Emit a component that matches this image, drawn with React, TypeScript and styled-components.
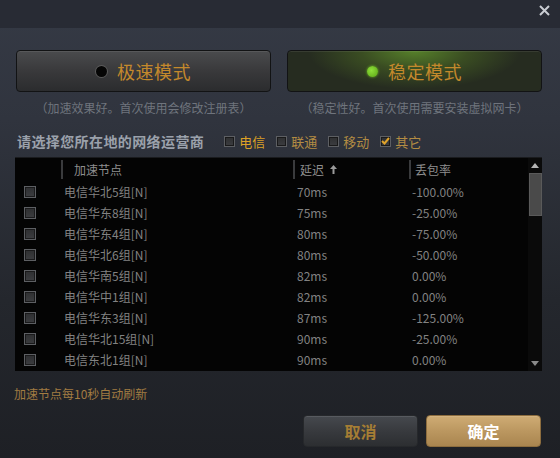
import React from "react";
import styled, { createGlobalStyle } from "styled-components";

const GlobalStyle = createGlobalStyle`
  html, body {
    margin: 0;
    padding: 0;
    background: #1e2025;
  }
  body {
    font-family: "Noto Sans CJK SC", "Noto Sans", "Liberation Sans", sans-serif;
  }
`;

const Dialog = styled.div`
  width: 560px;
  height: 458px;
  display: flex;
  flex-direction: column;
  background: linear-gradient(180deg, #353a45 0px, #30343e 120px, #24272d 300px, #1e2025 100%);
  overflow: hidden;
`;

const TitleBar = styled.div`
  height: 28px;
  flex-shrink: 0;
  display: flex;
  justify-content: flex-end;
  align-items: flex-start;
  background: #282b34;
`;

const CloseButton = styled.button`
  width: 30px;
  height: 20px;
  margin: 0 1px 0 0;
  padding: 0;
  border: 0;
  background: transparent;
  display: flex;
  align-items: center;
  justify-content: center;
  cursor: pointer;
`;

const Body = styled.div`
  flex: 1;
  display: flex;
  flex-direction: column;
  padding: 22px 18px 0 15px;
`;

const ModeRow = styled.div`
  display: grid;
  grid-template-columns: 255px 255px;
  column-gap: 16px;
  padding-left: 1px;
`;

const ModeColumn = styled.div`
  display: flex;
  flex-direction: column;
  align-items: center;
`;

const ModeButton = styled.button<{ $active?: boolean }>`
  width: 100%;
  height: 42px;
  border-radius: 4px;
  border: 1px solid #121314;
  display: flex;
  align-items: center;
  justify-content: center;
  gap: 10px;
  font-family: inherit;
  font-size: 18px;
  color: #c4892c;
  letter-spacing: 0.5px;
  cursor: pointer;
  box-shadow: inset 0 1px 0 rgba(255, 255, 255, 0.08);
  background: ${(p) =>
    p.$active
      ? "radial-gradient(ellipse 42% 95% at 50% 0%, #56802a 0%, #3a4d22 50%, #262c20 100%)"
      : "linear-gradient(180deg, #4a4b4d 0%, #39393b 50%, #2b2c2e 100%)"};
`;

const Dot = styled.span<{ $active?: boolean }>`
  width: 11px;
  height: 11px;
  border-radius: 50%;
  background: ${(p) => (p.$active ? "radial-gradient(circle at 40% 40%, #8fe03a, #5aa515)" : "#050505")};
  box-shadow: ${(p) => (p.$active ? "0 0 2px 1px rgba(120,200,40,0.4)" : "0 0 0 1px #5a5a5a")};
`;

const ModeHint = styled.div`
  margin-top: 8px;
  font-size: 12px;
  color: #6f747d;
  line-height: 16px;
`;

const ProviderRow = styled.div`
  margin-top: 16px;
  height: 18px;
  display: flex;
  align-items: center;
  padding-left: 2px;
`;

const ProviderLabel = styled.span`
  font-size: 14px;
  font-weight: bold;
  color: #9ba1ab;
  letter-spacing: 0.4px;
  margin-right: 20px;
`;

const Choice = styled.label<{ $hot?: boolean }>`
  display: flex;
  align-items: center;
  gap: 4px;
  margin-right: 11px;
  font-size: 13px;
  color: ${(p) => (p.$hot ? "#dca126" : "#b38c43")};
`;

const Box = styled.span<{ $size?: number }>`
  width: ${(p) => p.$size ?? 11}px;
  height: ${(p) => p.$size ?? 11}px;
  box-sizing: border-box;
  border: 1px solid #5d5f63;
  background: linear-gradient(180deg, #2e2f31, #3c3d40);
  box-shadow: inset 0 0 0 1px #1a1a1b;
  display: flex;
  align-items: center;
  justify-content: center;
`;

const Table = styled.div`
  margin-top: 7px;
  width: 527px;
  height: 213px;
  background: #040404;
  display: flex;
  border-top: 1px solid #1a1b1e;
`;

const TableMain = styled.div`
  flex: 1;
  display: flex;
  flex-direction: column;
`;

const Columns = "46px 232px 116px 1fr";

const HeaderRow = styled.div`
  display: grid;
  grid-template-columns: ${Columns};
  height: 23px;
  align-items: center;
`;

const HeaderCell = styled.div<{ $pad: number; $sep?: boolean }>`
  height: 19px;
  display: flex;
  align-items: center;
  gap: 6px;
  padding-left: ${(p) => p.$pad}px;
  font-size: 12px;
  color: #8e8e8e;
  border-left: ${(p) => (p.$sep ? "2px solid #3a3b3d" : "none")};
`;

const Row = styled.div`
  display: grid;
  grid-template-columns: ${Columns};
  height: 21px;
  align-items: center;
  font-size: 12px;
  color: #828282;
`;

const BoxCell = styled.div`
  display: flex;
  padding-left: 9px;
`;

const Cell = styled.div<{ $pad: number }>`
  padding-left: ${(p) => p.$pad}px;
  white-space: nowrap;
`;

const ScrollBar = styled.div`
  width: 14px;
  display: flex;
  flex-direction: column;
  align-items: center;
  background: #0a0a0a;
`;

const ScrollArrow = styled.div`
  height: 15px;
  display: flex;
  align-items: center;
  justify-content: center;
`;

const Thumb = styled.div`
  width: 13px;
  height: 43px;
  background: #4a4a4a;
  border: 1px solid #5a5a5a;
  box-sizing: border-box;
`;

const Spacer = styled.div`
  flex: 1;
`;

const Note = styled.div`
  margin-top: 15px;
  margin-left: -1px;
  font-size: 12px;
  color: #a27c42;
  line-height: 16px;
`;

const Footer = styled.div`
  margin-top: 13px;
  display: flex;
  justify-content: flex-end;
  gap: 8px;
  padding-right: 1px;
`;

const FooterButton = styled.button<{ $primary?: boolean }>`
  width: 115px;
  height: 32px;
  border-radius: 4px;
  font-family: inherit;
  font-size: 16px;
  font-weight: bold;
  cursor: pointer;
  border: 1px solid ${(p) => (p.$primary ? "#8d6d3e" : "#26282b")};
  color: ${(p) => (p.$primary ? "#ffffff" : "#a57d34")};
  background: ${(p) =>
    p.$primary
      ? "linear-gradient(180deg, #cfac74 0%, #bb9760 50%, #a9854f 100%)"
      : "linear-gradient(180deg, #46494e 0%, #383a3e 50%, #2c2e31 100%)"};
  box-shadow: inset 0 1px 0 rgba(255, 255, 255, 0.1);
`;

interface Node {
  name: string;
  delay: string;
  loss: string;
}

const nodes: Node[] = [
  { name: "电信华北5组[N]", delay: "70ms", loss: "-100.00%" },
  { name: "电信华东8组[N]", delay: "75ms", loss: "-25.00%" },
  { name: "电信华东4组[N]", delay: "80ms", loss: "-75.00%" },
  { name: "电信华北6组[N]", delay: "80ms", loss: "-50.00%" },
  { name: "电信华南5组[N]", delay: "82ms", loss: "0.00%" },
  { name: "电信华中1组[N]", delay: "82ms", loss: "0.00%" },
  { name: "电信华东3组[N]", delay: "87ms", loss: "-125.00%" },
  { name: "电信华北15组[N]", delay: "90ms", loss: "-25.00%" },
  { name: "电信东北1组[N]", delay: "90ms", loss: "0.00%" },
];

const providers = [
  { label: "电信", hot: true, checked: false },
  { label: "联通", hot: false, checked: false },
  { label: "移动", hot: false, checked: false },
  { label: "其它", hot: false, checked: true },
];

const Check = () => (
  <svg width="9" height="8" viewBox="0 0 9 8">
    <path d="M1 4 L3.5 6.5 L8 1" stroke="#e0a32a" strokeWidth="2" fill="none" />
  </svg>
);

export default function App() {
  return (
    <>
      <GlobalStyle />
      <Dialog>
        <TitleBar>
          <CloseButton aria-label="close">
            <svg width="11" height="11" viewBox="0 0 11 11">
              <path d="M1 1 L10 10 M10 1 L1 10" stroke="#c9ccd2" strokeWidth="2" />
            </svg>
          </CloseButton>
        </TitleBar>
        <Body>
          <ModeRow>
            <ModeColumn>
              <ModeButton>
                <Dot />
                极速模式
              </ModeButton>
              <ModeHint>（加速效果好。首次使用会修改注册表）</ModeHint>
            </ModeColumn>
            <ModeColumn>
              <ModeButton $active>
                <Dot $active />
                稳定模式
              </ModeButton>
              <ModeHint>（稳定性好。首次使用需要安装虚拟网卡）</ModeHint>
            </ModeColumn>
          </ModeRow>

          <ProviderRow>
            <ProviderLabel>请选择您所在地的网络运营商</ProviderLabel>
            {providers.map((p) => (
              <Choice key={p.label} $hot={p.hot}>
                <Box>{p.checked && <Check />}</Box>
                {p.label}
              </Choice>
            ))}
          </ProviderRow>

          <Table>
            <TableMain>
              <HeaderRow>
                <HeaderCell $pad={0} />
                <HeaderCell $pad={11} $sep>
                  加速节点
                </HeaderCell>
                <HeaderCell $pad={5} $sep>
                  延迟
                  <svg width="7" height="9" viewBox="0 0 7 9">
                    <path d="M3.5 0 L7 4 L4.5 4 L4.5 9 L2.5 9 L2.5 4 L0 4 Z" fill="#9a9a9a" />
                  </svg>
                </HeaderCell>
                <HeaderCell $pad={4} $sep>
                  丢包率
                </HeaderCell>
              </HeaderRow>
              {nodes.map((n) => (
                <Row key={n.name}>
                  <BoxCell>
                    <Box $size={12} />
                  </BoxCell>
                  <Cell $pad={3}>{n.name}</Cell>
                  <Cell $pad={4}>{n.delay}</Cell>
                  <Cell $pad={3}>{n.loss}</Cell>
                </Row>
              ))}
            </TableMain>
            <ScrollBar>
              <ScrollArrow>
                <svg width="8" height="5" viewBox="0 0 8 5">
                  <path d="M0 5 L4 0 L8 5 Z" fill="#b5b5b5" />
                </svg>
              </ScrollArrow>
              <Thumb />
              <Spacer />
              <ScrollArrow>
                <svg width="8" height="5" viewBox="0 0 8 5">
                  <path d="M0 0 L8 0 L4 5 Z" fill="#8a8a8a" />
                </svg>
              </ScrollArrow>
            </ScrollBar>
          </Table>

          <Note>加速节点每10秒自动刷新</Note>

          <Footer>
            <FooterButton>取消</FooterButton>
            <FooterButton $primary>确定</FooterButton>
          </Footer>
        </Body>
      </Dialog>
    </>
  );
}
